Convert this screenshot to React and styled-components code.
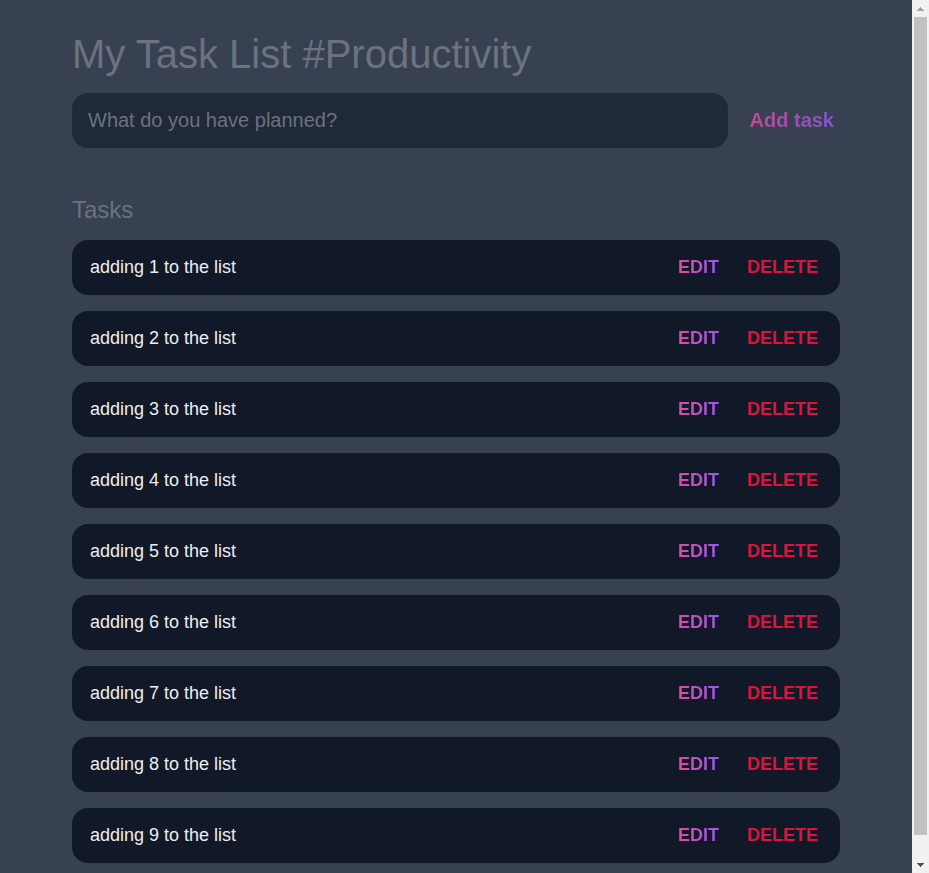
import React, { useEffect, useRef, useState } from "react";
import styled, { createGlobalStyle } from "styled-components";

const colors = {
  dark: "#374151",
  darker: "#1f2937",
  darkest: "#111827",
  grey: "#6b7280",
  light: "#eeeeee",
  pink: "#ec4899",
  purple: "#8b5cf6",
};

const GlobalStyle = createGlobalStyle`
  *, *::before, *::after {
    box-sizing: border-box;
    margin: 0;
    font-family: Arial, "Liberation Sans", sans-serif;
  }
  body {
    background: ${colors.dark};
    color: #ffffff;
  }
`;

const Shell = styled.div`
  display: flex;
  height: 100vh;
`;

const Page = styled.div`
  flex: 1;
  min-width: 0;
  overflow-y: auto;
  scrollbar-width: none;
`;

const Header = styled.header`
  width: 100%;
  max-width: 800px;
  margin: 0 auto;
  padding: 32px 16px;
`;

const Title = styled.h1`
  margin-bottom: 16px;
  color: ${colors.grey};
  font-size: 40px;
  font-weight: 300;
  line-height: 45px;
`;

const TaskForm = styled.form`
  display: flex;
  gap: 16px;
`;

const NewTaskInput = styled.input`
  flex: 1;
  min-width: 0;
  padding: 16px;
  border: none;
  outline: none;
  border-radius: 16px;
  background: ${colors.darker};
  color: ${colors.light};
  font-size: 20px;
  line-height: 23px;

  &::placeholder {
    color: ${colors.grey};
    opacity: 1;
  }
`;

const TextButton = styled.button`
  padding: 0 6px;
  border: none;
  background: none;
  color: crimson;
  font-size: 18px;
  font-weight: 700;
  cursor: pointer;
`;

const GradientButton = styled(TextButton)`
  background: linear-gradient(to right, ${colors.pink}, ${colors.purple});
  background-clip: text;
  -webkit-background-clip: text;
  -webkit-text-fill-color: transparent;
`;

const AddButton = styled(GradientButton)`
  font-size: 20px;
  opacity: 0.8;
`;

const Main = styled.main`
  width: 100%;
  max-width: 800px;
  margin: 0 auto;
  padding: 16px;
`;

const SectionTitle = styled.h2`
  margin-bottom: 16px;
  color: ${colors.grey};
  font-size: 24px;
  font-weight: 300;
  line-height: 28px;
`;

const TaskList = styled.ul`
  padding: 0;
  list-style: none;
`;

const TaskRow = styled.li`
  display: flex;
  justify-content: space-between;
  gap: 16px;
  margin-bottom: 16px;
  padding: 16px;
  border-radius: 16px;
  background: ${colors.darkest};
`;

const TaskText = styled.input`
  flex: 1;
  min-width: 0;
  height: 23px;
  padding: 0 2px;
  border: none;
  outline: none;
  background: none;
  color: ${colors.light};
  font-size: 18px;
`;

const Actions = styled.div`
  display: flex;
  gap: 16px;
  text-transform: uppercase;

  button {
    text-transform: uppercase;
  }
`;

const Scrollbar = styled.div`
  display: flex;
  flex-direction: column;
  width: 17px;
  background: #f1f1f1;
`;

const ArrowButton = styled.button`
  display: grid;
  place-items: center;
  height: 17px;
  padding: 0;
  border: none;
  background: none;
  color: ${(p) => (p.$muted ? "#a3a3a3" : "#505050")};
`;

const Track = styled.div`
  flex: 1;
  padding: 0 2px;
`;

const Thumb = styled.div`
  background: #c1c1c1;
`;

function Arrow({ down }) {
  return (
    <svg width="7" height="4" viewBox="0 0 7 4" fill="currentColor" shapeRendering="crispEdges" aria-hidden="true">
      <path
        d={
          down
            ? "M0 0H7V1H6V2H5V3H4V4H3V3H2V2H1V1H0Z"
            : "M3 0H4V1H5V2H6V3H7V4H0V3H1V2H2V1H3Z"
        }
      />
    </svg>
  );
}

const initialTasks = Array.from({ length: 9 }, (_, i) => ({
  id: i + 1,
  text: `adding ${i + 1} to the list`,
}));

function Task({ task, onChange, onDelete }) {
  const [editing, setEditing] = useState(false);
  const field = useRef(null);

  const toggle = () => {
    if (!editing) field.current.focus();
    setEditing(!editing);
  };

  return (
    <TaskRow>
      <TaskText
        ref={field}
        type="text"
        aria-label={`Task ${task.id}`}
        value={task.text}
        readOnly={!editing}
        onChange={(e) => onChange(task.id, e.target.value)}
      />
      <Actions>
        <GradientButton type="button" onClick={toggle}>
          {editing ? "Save" : "Edit"}
        </GradientButton>
        <TextButton type="button" onClick={() => onDelete(task.id)}>
          Delete
        </TextButton>
      </Actions>
    </TaskRow>
  );
}

export default function App() {
  const [tasks, setTasks] = useState(initialTasks);
  const [draft, setDraft] = useState("");
  const [scroll, setScroll] = useState({ top: 0, size: 100 });
  const page = useRef(null);

  const measure = () => {
    const el = page.current;
    setScroll({
      top: (el.scrollTop / el.scrollHeight) * 100,
      size: (el.clientHeight / el.scrollHeight) * 100,
    });
  };

  useEffect(() => {
    measure();
    window.addEventListener("resize", measure);
    return () => window.removeEventListener("resize", measure);
  }, [tasks]);

  const addTask = (e) => {
    e.preventDefault();
    if (!draft.trim()) return;
    setTasks([...tasks, { id: Date.now(), text: draft }]);
    setDraft("");
  };

  const changeTask = (id, text) =>
    setTasks(tasks.map((t) => (t.id === id ? { ...t, text } : t)));

  return (
    <>
      <GlobalStyle />
      <Shell>
        <Page ref={page} onScroll={measure}>
          <Header>
            <Title>My Task List #Productivity</Title>
            <TaskForm onSubmit={addTask}>
              <NewTaskInput
                type="text"
                aria-label="New task"
                placeholder="What do you have planned?"
                value={draft}
                onChange={(e) => setDraft(e.target.value)}
              />
              <AddButton type="submit">Add task</AddButton>
            </TaskForm>
          </Header>
          <Main>
            <SectionTitle>Tasks</SectionTitle>
            <TaskList>
              {tasks.map((task) => (
                <Task
                  key={task.id}
                  task={task}
                  onChange={changeTask}
                  onDelete={(id) => setTasks(tasks.filter((t) => t.id !== id))}
                />
              ))}
            </TaskList>
          </Main>
        </Page>
        <Scrollbar>
          <ArrowButton
            type="button"
            aria-label="Scroll up"
            $muted={scroll.top === 0}
            onClick={() => page.current.scrollBy(0, -40)}
          >
            <Arrow />
          </ArrowButton>
          <Track>
            <Thumb style={{ height: `${scroll.size}%`, marginTop: 0, transform: `translateY(${(scroll.top / scroll.size) * 100}%)` }} />
          </Track>
          <ArrowButton
            type="button"
            aria-label="Scroll down"
            onClick={() => page.current.scrollBy(0, 40)}
          >
            <Arrow down />
          </ArrowButton>
        </Scrollbar>
      </Shell>
    </>
  );
}
